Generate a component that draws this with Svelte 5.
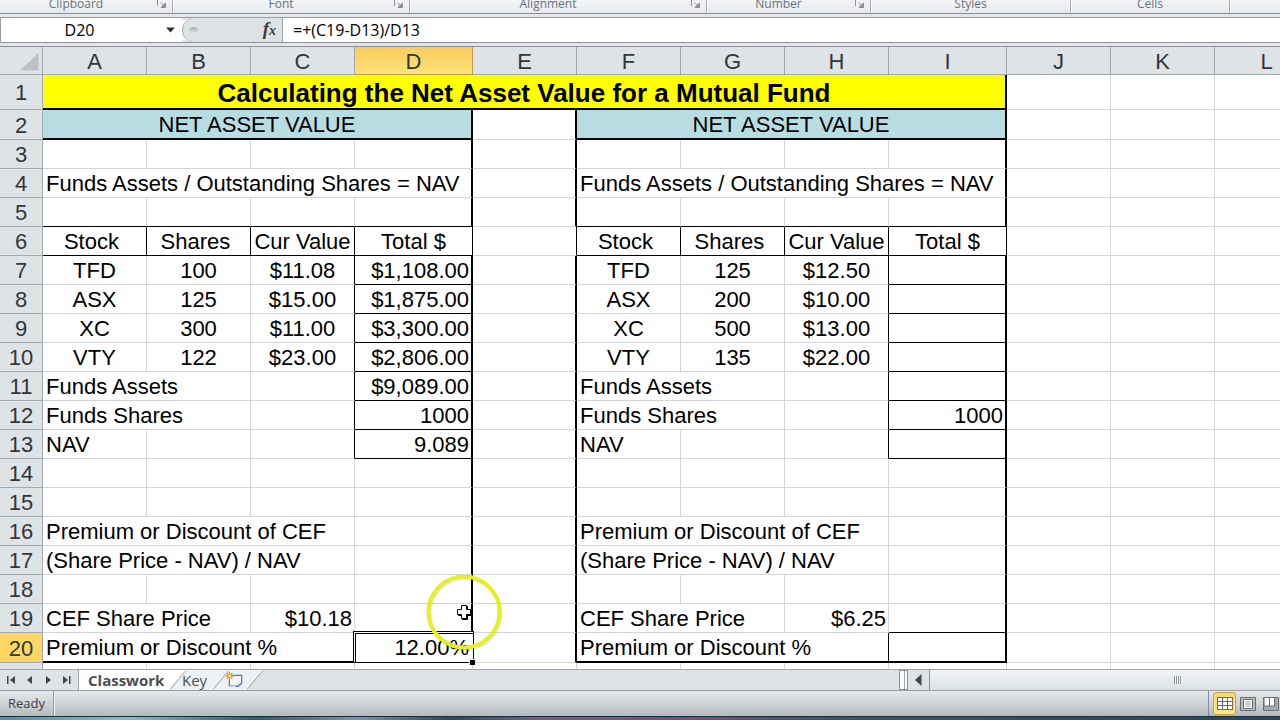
<script>
  const cols = ['A', 'B', 'C', 'D', 'E', 'F', 'G', 'H', 'I', 'J', 'K', 'L'];
  const wide = ['D', 'I'];

  const groups = [
    { name: 'Clipboard', size: 'g-clip', launcher: true },
    { name: 'Font', size: 'g-font', launcher: true },
    { name: 'Alignment', size: 'g-align', launcher: true },
    { name: 'Number', size: 'g-num', launcher: true },
    { name: 'Styles', size: 'g-styles', launcher: false },
    { name: 'Cells', size: 'g-cells', launcher: false }
  ];

  const left = {
    stocks: [
      ['TFD', '100', '$11.08', '$1,108.00'],
      ['ASX', '125', '$15.00', '$1,875.00'],
      ['XC', '300', '$11.00', '$3,300.00'],
      ['VTY', '122', '$23.00', '$2,806.00']
    ],
    assets: '$9,089.00',
    shares: '1000',
    nav: '9.089',
    price: '$10.18',
    premium: '12.00%',
    active: true
  };

  const right = {
    stocks: [
      ['TFD', '125', '$12.50', ''],
      ['ASX', '200', '$10.00', ''],
      ['XC', '500', '$13.00', ''],
      ['VTY', '135', '$22.00', '']
    ],
    assets: '',
    shares: '1000',
    nav: '',
    price: '$6.25',
    premium: '',
    active: false
  };

  // Border classes: rk/bk thin black right/bottom, rt/bt thick black right/bottom.
  const cell = (t = '', c = '', span = 1) => ({ t, c, span });

  function block(n, d) {
    if (n === 2) return [cell('NET ASSET VALUE', 'center teal bt rt', 4)];
    if (n === 4) return [cell('Funds Assets / Outstanding Shares = NAV', 'rt', 4)];
    if (n === 5) return [cell('', 'bk'), cell('', 'bk'), cell('', 'bk'), cell('', 'bk rt')];
    if (n === 6)
      return [
        cell('Stock\u00a0', 'center rk bk'),
        cell('Shares\u00a0', 'center rk bk'),
        cell('Cur Value', 'center tight rk bk'),
        cell('Total $', 'center rk bk')
      ];
    if (n >= 7 && n <= 10) {
      const s = d.stocks[n - 7];
      return [cell(s[0], 'center'), cell(s[1], 'center'), cell(s[2], 'center rk'), cell(s[3], 'num rt bk')];
    }
    if (n === 11) return [cell('Funds Assets', '', 2), cell('', 'rk'), cell(d.assets, 'num rt bk')];
    if (n === 12) return [cell('Funds Shares', '', 2), cell('', 'rk'), cell(d.shares, 'num rt bk')];
    if (n === 13) return [cell('NAV'), cell(), cell('', 'rk'), cell(d.nav, 'num rt bk')];
    if (n === 16) return [cell('Premium or Discount of CEF', '', 3), cell('', 'rt')];
    if (n === 17) return [cell('(Share Price - NAV) / NAV', '', 3), cell('', 'rt')];
    if (n === 19) return [cell('CEF Share Price', '', 2), cell(d.price, 'num'), cell('', 'rt bk')];
    if (n === 20) return [cell('Premium or Discount %', 'rk bt', 3), cell(d.premium, d.active ? 'num rt bt active' : 'num rt bt')];
    if (n === 21) return [cell(), cell(), cell(), cell()];
    return [cell(), cell(), cell(), cell('', 'rt')];
  }

  function makeRow(n) {
    const tail = [cell(), cell(), cell()];
    if (n === 1) {
      return [cell('Calculating the Net Asset Value for a Mutual Fund', 'center title bt rt', 9), ...tail];
    }
    const gap = n === 21 ? '' : n === 6 ? 'rk' : 'rt';
    return [...block(n, left), cell('', gap), ...block(n, right), ...tail];
  }

  const rows = Array.from({ length: 21 }, (_, i) => ({ n: i + 1, cells: makeRow(i + 1) }));
</script>

<div class="app">
  <div class="ribbon">
    {#each groups as g}
      <div class="group {g.size}">
        <span class="gname">{g.name}</span>
        {#if g.launcher}
          <button class="launch" aria-label="{g.name} settings">
            <svg width="10" height="10" viewBox="0 0 10 10" fill="none" stroke="#8a9096">
              <path d="M.5 7V.5H8" />
              <path d="M3.5 3.5l3 3" />
              <path d="M8.5 3.500V8.500H3.500z" fill="#8a9096" stroke="none" />
              <path d="M8.500 4v4.500H4" />
            </svg>
          </button>
        {/if}
      </div>
    {/each}
  </div>

  <div class="formula">
    <input class="namebox" aria-label="Name Box" value="D20" />
    <button class="drop" aria-label="Open name list">
      <svg width="10" height="6" viewBox="0 0 10 6"><path d="M0 .5h9L4.500 5.500z" fill="#333" /></svg>
    </button>
    <div class="fxwrap">
      <span class="dimple"></span>
      <button class="fx" aria-label="Insert Function"><i>f</i><i class="x">x</i></button>
    </div>
    <input class="expr" aria-label="Formula Bar" value="=+(C19-D13)/D13" />
  </div>

  <main class="sheet">
    <table>
      <colgroup>
        <col class="c-head" />
        {#each cols as c}<col class={wide.includes(c) ? 'c-wide' : 'c-std'} />{/each}
      </colgroup>
      <thead>
        <tr>
          <th class="corner" aria-label="Select all">
            <svg width="19" height="18" viewBox="0 0 19 18"><path d="M18.500 0v17.500H0z" fill="#bcc1c5" /></svg>
          </th>
          {#each cols as c}<th scope="col" class:sel={c === 'D'}>{c}</th>{/each}
        </tr>
      </thead>
      <tbody>
        {#each rows as r}
          <tr class="r{r.n}">
            <th scope="row" class:sel={r.n === 20}>{r.n === 21 ? '' : r.n}</th>
            {#each r.cells as c}
              <td class={c.c} colspan={c.span}>{c.t}{#if c.c.includes('active')}<span class="frame"></span><span class="handle"></span>{/if}</td>
            {/each}
          </tr>
        {/each}
      </tbody>
    </table>
    <svg class="pointer" width="84" height="84" viewBox="0 0 84 84" fill="none">
      <circle cx="43" cy="43.500" r="35.500" stroke="#777" stroke-opacity=".2" stroke-width="4" />
      <circle cx="42" cy="42" r="35.500" stroke="#e4f021" stroke-width="4" />
      <path d="M39.500 35.500h5v4h4v5h-4v4h-5v-4h-4v-5h4z" transform="translate(1 1)" fill="#000" stroke="#000" />
      <path d="M39.500 35.500h5v4h4v5h-4v4h-5v-4h-4v-5h4z" fill="#fff" stroke="#000" />
    </svg>
  </main>

  <footer>
    <div class="tabs">
      <div class="nav">
        <button aria-label="First sheet"><svg width="9" height="10" viewBox="0 0 9 10"><path d="M0 1h1.500v8H0zM8 1v8L3 5z" /></svg></button>
        <button aria-label="Previous sheet"><svg width="9" height="10" viewBox="0 0 9 10"><path d="M7 1v8L2 5z" /></svg></button>
        <button aria-label="Next sheet"><svg width="9" height="10" viewBox="0 0 9 10"><path d="M2 1v8l5-4z" /></svg></button>
        <button aria-label="Last sheet"><svg width="9" height="10" viewBox="0 0 9 10"><path d="M1 1v8l5-4zM7 1h1.500v8H7z" /></svg></button>
      </div>
      <button class="tab on">Classwork</button>
      <svg class="slant" width="16" height="20" viewBox="0 0 16 20"><path d="M0 0h16L0 19z" fill="#fff" /><path d="M16 0v20H0z" fill="#eef1f3" /><path d="M0 19.500L16 .5" stroke="#9aa0a5" /></svg>
      <button class="tab key">Key</button>
      <svg class="slant" width="16" height="20" viewBox="0 0 16 20"><path d="M0 0h16v20H0z" fill="#eef1f3" /><path d="M0 19.500L16 .5" stroke="#9aa0a5" /></svg>
      <button class="tab add" aria-label="Insert Worksheet">
        <svg width="18" height="16" viewBox="0 0 18 16" fill="none">
          <path d="M6 3.500h10.500v8.500M4.500 7v6.500h8" stroke="#5b7bb0" stroke-width="1.500" />
          <path d="M6 4h10v7.500l-3.500 2H5V7z" fill="#eef4fc" />
          <path d="M11 14.500c2.500.5 2.500-3 5.500-3-1 2-2.500 3.500-5.500 3z" fill="#c5d6ee" stroke="#4d6da6" />
          <path d="M4.500 0v8M.5 4h8M1.700 1.200l5.600 5.600M7.300 1.200L1.700 6.800" stroke="#e59a2f" stroke-width="1.300" />
          <circle cx="4.500" cy="4" r="1.300" fill="#fff2a8" />
        </svg>
      </button>
      <svg class="slant" width="16" height="20" viewBox="0 0 16 20"><path d="M0 0h16L0 19z" fill="#eef1f3" /><path d="M0 19.500L16 .5" stroke="#9aa0a5" /></svg>
      <div class="hscroll">
        <span class="split"></span>
        <button class="arrow" aria-label="Scroll left"><svg width="7" height="12" viewBox="0 0 7 12"><path d="M6.500 0v12L0 6z" fill="#3f4449" /></svg></button>
        <div class="thumb"><span class="grip"></span></div>
      </div>
    </div>
    <div class="status">
      <span class="ready">Ready</span>
      <div class="views">
        <button class="view on" aria-label="Normal view" aria-pressed="true">
          <svg width="16" height="13" viewBox="0 0 16 13"><path d="M0 0h16v13H0z" fill="#6b6a63" /><path d="M1 1h4v3H1zM6 1h4v3H6zM11 1h4v3h-4zM1 5h4v3H1zM6 5h4v3H6zM11 5h4v3h-4zM1 9h4v3H1zM6 9h4v3H6zM11 9h4v3h-4z" fill="#fff" /></svg>
        </button>
        <button class="view" aria-label="Page Layout view">
          <svg width="16" height="14" viewBox="0 0 16 14"><path d="M.5.5h15v13H.5z" fill="#b9bcbe" stroke="#6c7074" /><path d="M3.500 2.500h9v9h-9z" fill="#fff" stroke="#6c7074" /><path d="M5.500 5h5M5.500 7h5M5.500 9h5" stroke="#999" /></svg>
        </button>
        <button class="view" aria-label="Page Break Preview">
          <svg width="16" height="14" viewBox="0 0 16 14"><path d="M.5.5h15v13H.5z" fill="#a6aaad" stroke="#6c7074" /><path d="M2 1h4v8H2zM7 1h4v8H7z" fill="#fff" /><path d="M6.500 0v9M11.500 0v9H1" stroke="#6c7074" fill="none" /></svg>
        </button>
      </div>
    </div>
    <div class="desktop"></div>
  </footer>
</div>

<style>
  .app {
    display: flex;
    flex-direction: column;
    height: 100vh;
    overflow: hidden;
    background: #fff;
    font-family: 'Open Sans', 'Noto Sans', sans-serif;
    color: #000;
  }
  .app * { box-sizing: border-box; }
  button, input {
    margin: 0;
    padding: 0;
    border: 0;
    background: none;
    font: inherit;
    color: inherit;
  }
  svg { display: block; flex: none; }

  .ribbon {
    display: flex;
    flex: none;
    height: 14px;
    background: linear-gradient(#f3f4f6, #e6e9ed);
    border-bottom: 1px solid #8b9096;
  }
  .group {
    display: flex;
    flex: none;
    align-items: flex-end;
    border-right: 1px solid #a9aeb4;
    box-shadow: 1px 0 #fff;
  }
  .g-clip { width: 173px; }
  .g-font { width: 237px; }
  .g-align { width: 297px; }
  .g-num { width: 164px; }
  .g-styles { width: 200px; }
  .g-cells { width: 159px; }
  .gname {
    flex: 1;
    text-align: center;
    font-size: 12px;
    line-height: 18px;
    color: #6b7279;
  }
  .launch { width: 20px; padding: 0 0 4px 5px; }

  .formula {
    display: flex;
    flex: none;
    height: 33px;
    padding: 4px 0 3px;
    align-items: stretch;
    background:
      linear-gradient(#9a9da3, #9a9da3) 0 3px / 100% 1px no-repeat,
      linear-gradient(#8f9399, #8f9399) 0 28px / 100% 1px no-repeat,
      linear-gradient(#8f9399, #8f9399) 0 32px / 100% 1px no-repeat,
      #e3e5ea;
    font-size: 16px;
  }
  .namebox { width: 160px; height: 24px; padding-right: 2px; background: #fff; text-align: center; border-left: 1px solid #9a9da3; }
  .drop { width: 22px; height: 24px; padding-left: 6px; background: #fff; }
  .fxwrap {
    display: flex;
    align-items: center;
    justify-content: space-between;
    width: 101px;
    height: 24px;
    padding: 0 6px;
    background: #dde2e5;
    border-left: 1px solid #a4a8ac;
    border-right: 1px solid #9a9da3;
    border-radius: 12px 0 0 12px;
    box-shadow: -10px 0 0 -2px #fff;
  }
  .dimple { width: 9px; height: 7px; border-radius: 50%; background: linear-gradient(#a8adb0, #e6e9eb); }
  .fx { font: bold 19px/20px 'Liberation Serif', serif; color: #3a3d40; }
  .fx .x { font-size: 14px; }
  .expr { flex: 1; min-width: 0; height: 24px; padding-left: 10px; background: #fff; }

  .sheet {
    position: relative;
    flex: 1;
    min-height: 0;
    overflow: hidden;
    font-family: 'Liberation Sans', Arial, sans-serif;
  }
  table {
    table-layout: fixed;
    width: 1319px;
    border-collapse: separate;
    border-spacing: 0;
    font-size: 22px;
    line-height: 24px;
  }
  .c-head { width: 43px; }
  .c-std { width: 104px; }
  .c-wide { width: 118px; }
  th {
    padding: 2px 0 0;
    font-weight: normal;
    color: #333638;
    background: #dee3e6;
    border-right: 1px solid #a3a8ad;
    border-bottom: 1px solid #a3a8ad;
  }
  thead th { height: 28px; }
  .corner { padding: 2px 3px 0 20px; }
  th.sel { background: #fdd663; }
  thead th.sel { background: linear-gradient(#fbcb5c, #fce27a); border-color: #c39a45; }
  td {
    height: 29px;
    padding: 2px 3px 0;
    white-space: nowrap;
    border-right: 1px solid #d3d5d7;
    border-bottom: 1px solid #d3d5d7;
  }
  .r1 td { height: 35px; }
  .r2 td, .r20 td { height: 30px; }
  td.center { text-align: center; }
  td.tight { padding: 2px 0 0; }
  td.num { text-align: right; padding-right: 2px; }
  td.rk { border-right: 1px solid #000; }
  td.bk { border-bottom: 1px solid #000; }
  td.rt { border-right: 2px solid #000; }
  td.bt { border-bottom: 2px solid #000; }
  td.teal { background: #b7dde3; }
  td.title { background: #ff0; font-size: 26px; font-weight: bold; }
  td.active { position: relative; border-color: #fff; }
  .frame {
    position: absolute;
    inset: -2px -3px -2px -2px;
    border: 1px solid #000;
    box-shadow: inset 1px 1px #fff, inset 2px 2px #000;
  }
  .handle {
    position: absolute;
    right: -4px;
    bottom: -4px;
    width: 6px;
    height: 6px;
    background: #000;
    border: solid #fff;
    border-width: 1px 0 0 1px;
  }
  .pointer { position: absolute; left: 422px; top: 523px; }

  footer { flex: none; }
  .tabs {
    display: flex;
    height: 20px;
    background: #dde3e6;
    border-top: 1px solid #a0a5a9;
    box-sizing: content-box;
    border-bottom: 1px solid #999ea2;
    font-size: 15px;
    line-height: 20px;
    color: #4a4e52;
  }
  .nav {
    display: flex;
    width: 79px;
    padding: 0 2px;
    border-right: 1px solid #a0a5a9;
    fill: #3b4652;
  }
  .nav button { flex: 1; display: flex; align-items: center; justify-content: center; }
  .tab { flex: none; height: 20px; text-align: left; }
  .tab.on { width: 91px; padding-left: 9px; background: #fff; font-weight: bold; }
  .tab.key, .tab.add { margin-left: -4px; background: linear-gradient(90deg, transparent 4px, #eef1f3 4px); }
  .tab.key { width: 31px; }
  .tab.add { width: 22px; }
  .hscroll { display: flex; margin-left: auto; width: 381px; align-items: stretch; }
  .split { width: 9px; border: 1px solid #888d91; background: #fff; box-shadow: inset -2px 0 #fff, inset -3px 0 #aaa; }
  .arrow { width: 21px; display: flex; align-items: center; justify-content: center; }
  .thumb {
    flex: 1;
    display: flex;
    align-items: center;
    padding-left: 244px;
    border-left: 1px solid #8f9498;
    background: linear-gradient(#f2f4f6, #dde1e4);
  }
  .grip { width: 8px; height: 8px; background: repeating-linear-gradient(90deg, #8b9094 0 1px, #fff 1px 2px); }
  .status {
    display: flex;
    justify-content: space-between;
    align-items: stretch;
    height: 25px;
    background: linear-gradient(#e6e8e9, #cfd3d5 50%, #b4b9bc);
    font-size: 13px;
    line-height: 24px;
    color: #3d4145;
  }
  .ready { width: 54px; padding-left: 8px; border-right: 1px solid #989da1; box-shadow: 1px 0 #eee; }
  .views { display: flex; align-items: center; width: 72px; padding-left: 4px; border-left: 1px solid #7f8faa; overflow: hidden; }
  .view { flex: none; width: 23px; height: 23px; display: flex; align-items: center; justify-content: center; }
  .view.on { background: linear-gradient(#fbd873, #ffe787); border: 1px solid #c7a14e; border-radius: 3px; }
  .desktop { height: 4px; border-top: 1px solid #16303f; background: linear-gradient(90deg, #5d8ba5, #8fb8c9 10%, #35586b 20%, #7b93b3 28%, #2d4a5c 35%, #77607c 42%, #7a4e74 55%, #3b5468 65%, #2c4558); }
</style>
